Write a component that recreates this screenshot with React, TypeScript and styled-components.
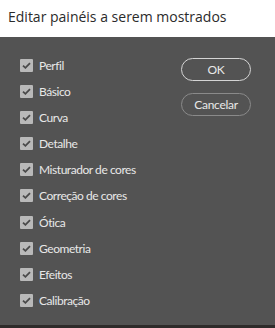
import React, { useState } from "react";
import styled, { createGlobalStyle } from "styled-components";

const panels = [
  "Perfil",
  "Básico",
  "Curva",
  "Detalhe",
  "Misturador de cores",
  "Correção de cores",
  "Ótica",
  "Geometria",
  "Efeitos",
  "Calibração",
];

const GlobalStyle = createGlobalStyle`
  html, body {
    margin: 0;
    padding: 0;
    background: #ffffff;
    font-family: "Open Sans", "Noto Sans", sans-serif;
  }
`;

function CheckBox(props) {
  return (
    <Box onClick={props.onToggle}>
      {props.checked && (
        <svg width="9" height="7" viewBox="0 0 9 7">
          <path
            d="M1 3.6 L3.4 5.8 L8 1.2"
            fill="none"
            stroke="#4a4a4a"
            strokeWidth="1.8"
          />
        </svg>
      )}
    </Box>
  );
}

export default function App() {
  const [checked, setChecked] = useState(panels.map(() => true));

  return (
    <Dialog>
      <GlobalStyle />
      <TitleBar>Editar painéis a serem mostrados</TitleBar>
      <Body>
        <List>
          {panels.map((name, i) => (
            <Row key={name}>
              <CheckBox
                checked={checked[i]}
                onToggle={() =>
                  setChecked(checked.map((c, j) => (j === i ? !c : c)))
                }
              />
              <Label>{name}</Label>
            </Row>
          ))}
        </List>
        <Buttons>
          <PillButton primary>OK</PillButton>
          <PillButton>Cancelar</PillButton>
        </Buttons>
      </Body>
      <BottomEdge />
    </Dialog>
  );
}

const Dialog = styled.div`
  width: 275px;
  height: 328px;
  display: flex;
  flex-direction: column;
  overflow: hidden;
`;

const TitleBar = styled.div`
  height: 37px;
  box-sizing: border-box;
  padding: 7px 0 0 8px;
  background: #ffffff;
  color: #2b2b2b;
  font-size: 14px;
  line-height: 20px;
`;

const Body = styled.div`
  flex: 1;
  background: #535353;
  display: flex;
  justify-content: space-between;
  padding: 0 24px 0 20px;
`;

const List = styled.div`
  display: flex;
  flex-direction: column;
  gap: 9.1px;
  padding-top: 20px;
`;

const Row = styled.div`
  display: flex;
  align-items: center;
  height: 17px;
`;

const Box = styled.div`
  width: 13px;
  height: 13px;
  border-radius: 1px;
  background: #b9b9b9;
  display: flex;
  align-items: center;
  justify-content: center;
  margin-right: 6px;
  cursor: pointer;
`;

const Label = styled.span`
  color: #e8e8e8;
  font-family: Lato, "Open Sans", sans-serif;
  font-size: 12px;
  letter-spacing: -0.45px;
`;

const Buttons = styled.div`
  display: flex;
  flex-direction: column;
  gap: 12px;
  padding-top: 21px;
`;

const PillButton = styled.button<{ primary?: boolean }>`
  width: 70px;
  height: 23px;
  border-radius: 12px;
  background: transparent;
  border: 1.5px solid ${(p) => (p.primary ? "#d4d4d4" : "#8a8a8a")};
  color: #e8e8e8;
  font-family: Lato, "Open Sans", sans-serif;
  font-size: 12px;
  letter-spacing: -0.3px;
  padding: 0;
`;

const BottomEdge = styled.div`
  height: 3px;
  background: #2e2b2a;
`;
